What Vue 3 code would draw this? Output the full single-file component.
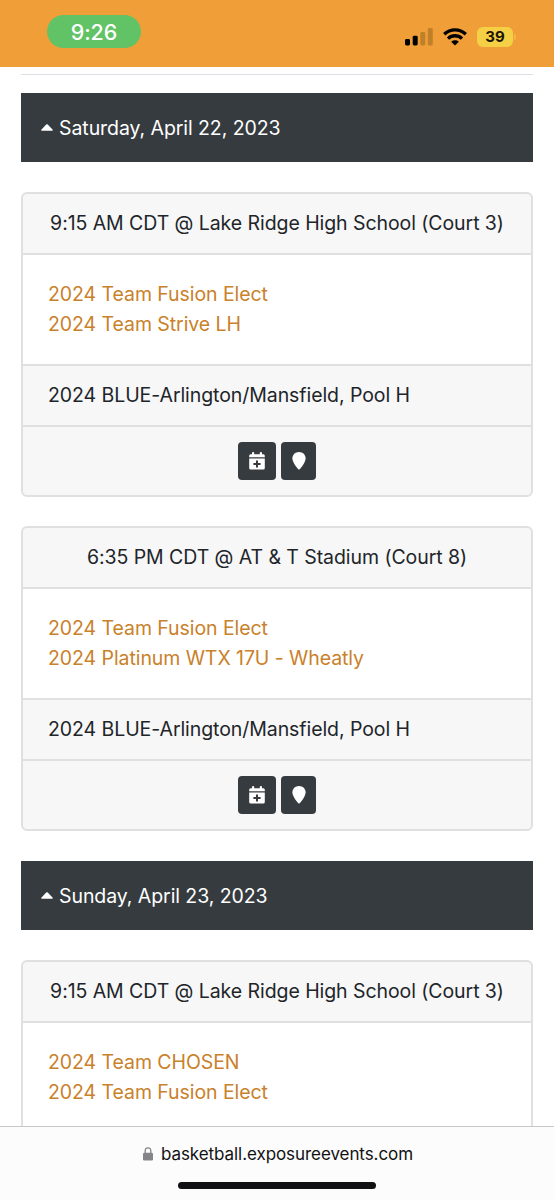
<script setup>
const pool = '2024 BLUE-Arlington/Mansfield, Pool H'
const days = [
  {
    date: 'Saturday, April 22, 2023',
    games: [
      { title: '9:15 AM CDT @ Lake Ridge High School (Court 3)', teams: ['2024 Team Fusion Elect', '2024 Team Strive LH'], pool },
      { title: '6:35 PM CDT @ AT & T Stadium (Court 8)', teams: ['2024 Team Fusion Elect', '2024 Platinum WTX 17U - Wheatly'], pool },
    ],
  },
  {
    date: 'Sunday, April 23, 2023',
    games: [
      { title: '9:15 AM CDT @ Lake Ridge High School (Court 3)', teams: ['2024 Team CHOSEN', '2024 Team Fusion Elect'] },
    ],
  },
]
</script>

<template>
  <div class="screen">
    <header class="status">
      <div class="time">9:26</div>
      <div class="indicators">
        <svg class="signal" width="28" height="18" viewBox="0 0 28 18">
          <rect x="0" y="11" width="5" height="6.5" rx="1.4" />
          <rect x="7.7" y="7.8" width="5" height="9.7" rx="1.4" />
          <rect x="15.3" y="4" width="5" height="13.5" rx="1.4" fill="#c08029" />
          <rect x="22.8" y="0" width="5" height="17.5" rx="1.4" fill="#c08029" />
        </svg>
        <svg class="wifi" width="24" height="18" viewBox="0 0 24 18">
          <g fill="none" stroke="#000" stroke-width="3.3">
            <path d="M1.2 6.3C7.2 .4 16.8 .4 22.8 6.3" />
            <path d="M5 10.6C9 6.8 15 6.8 19 10.6" />
          </g>
          <path d="M8.2 13.7C10.4 11.9 13.6 11.9 15.8 13.7L12 17.5Z" />
        </svg>
        <div class="battery"><span>39</span><i></i></div>
      </div>
    </header>

    <main class="page">
      <div class="rule"></div>
      <section v-for="day in days" :key="day.date" class="day">
        <h2 class="date">
          <svg width="12" height="7" viewBox="0 0 12 7"><path d="M.8 6.8Q-.2 6.5 .5 5.6L5.2 .6Q6 -.1 6.8 .6L11.5 5.6Q12.2 6.5 11.2 6.8Z" fill="#fff" /></svg>
          <span>{{ day.date }}</span>
        </h2>
        <article v-for="game in day.games" :key="game.title" class="card">
          <div class="title">{{ game.title }}</div>
          <div class="teams">
            <a v-for="team in game.teams" :key="team">{{ team }}</a>
          </div>
          <template v-if="game.pool">
            <div class="pool">{{ game.pool }}</div>
            <div class="actions">
              <button class="btn calendar" aria-label="Add to calendar">
                <svg width="16" height="18" viewBox="0 0 16 18">
                  <path fill="#fff" d="M3 1Q3 0 4.1 0T5.2 1V2.2H10.8V1Q10.8 0 11.9 0T13 1V2.2H14.3Q15.8 2.2 15.8 3.7V5.2H.2V3.7Q.2 2.2 1.7 2.2H3Z" />
                  <path fill="#fff" fill-rule="evenodd" d="M.2 6.5H15.8V16Q15.8 17.5 14.3 17.5H1.7Q.2 17.5 .2 16ZM7 8.4V11H4.4V13H7V15.6H9V13H11.6V11H9V8.4Z" />
                </svg>
              </button>
              <button class="btn" aria-label="Location">
                <svg width="14" height="18" viewBox="0 0 14 18"><path fill="#fff" d="M7 0C3.2 0 .4 2.8 .4 6.4C.4 9.6 3.8 14.2 6.1 17.1Q7 18.1 7.9 17.1C10.2 14.2 13.6 9.6 13.6 6.4C13.6 2.8 10.8 0 7 0Z" /></svg>
              </button>
            </div>
          </template>
        </article>
      </section>
    </main>

    <footer class="browser">
      <div class="address">
        <svg width="10" height="14" viewBox="0 0 10 14">
          <path d="M2.2 6V3.8Q2.2 .8 5 .8T7.8 3.8V6" fill="none" stroke="#858589" stroke-width="1.3" />
          <rect x="0" y="5.8" width="10" height="7.8" rx="1.4" fill="#858589" />
        </svg>
        <span>basketball.exposureevents.com</span>
      </div>
      <div class="home"></div>
    </footer>
  </div>
</template>

<style>
body { margin: 0; background: #fff; }
</style>

<style scoped>
.screen {
  width: 554px;
  height: 1200px;
  display: flex;
  flex-direction: column;
  overflow: hidden;
  background: #fff;
  color: #212529;
  font: 400 19.5px/30px Inter, "Liberation Sans", sans-serif;
  letter-spacing: -0.07px;
}
.status {
  flex: none;
  box-sizing: border-box;
  height: 67px;
  padding: 15px 38px 0 47px;
  display: flex;
  justify-content: space-between;
  background: #f09f38;
}
.time {
  width: 94px;
  height: 33px;
  border-radius: 16.5px;
  background: #62c366;
  color: #fff;
  font-size: 21.5px;
  font-weight: 500;
  line-height: 34px;
  text-align: center;
}
.indicators { display: flex; align-items: flex-start; padding-top: 12px; letter-spacing: 0; }
.signal { margin: 1px 10px 0 0; }
.wifi { margin: 1px 10px 0 0; }
.battery {
  display: flex;
  align-items: center;
  gap: 1px;
}
.battery span {
  width: 36px;
  height: 20px;
  border-radius: 6px;
  background: #f5cf45;
  color: #1c1603;
  font-size: 15px;
  font-weight: 700;
  line-height: 20px;
  text-align: center;
}
.battery i { width: 2px; height: 6px; border-radius: 0 2px 2px 0; background: #f3b83e; }
.page { flex: 1; min-height: 0; overflow: hidden; padding: 7px 21px 0; }
.rule { height: 1px; margin-bottom: 18px; background: #dddde3; }
.date {
  box-sizing: border-box;
  height: 69px;
  margin: 0 0 30px;
  padding: 0 0 0 20px;
  display: flex;
  align-items: center;
  gap: 6px;
  background: #363b3f;
  color: #fff;
  font-size: 19.5px;
  font-weight: 400;
}
.card {
  margin-bottom: 29px;
  border: 2px solid #e0e0e0;
  border-radius: 6px;
  background: #f7f7f7;
}
.card:last-child { margin-bottom: 30px; }
.title { height: 59px; line-height: 59px; text-align: center; white-space: nowrap; }
.teams {
  height: 85px;
  padding: 24px 25px 0;
  display: flex;
  flex-direction: column;
  border: solid #e0e0e0;
  border-width: 2px 0;
  background: #fff;
  color: #c9812a;
}
.pool { height: 59px; padding-left: 25px; line-height: 59px; border-bottom: 2px solid #e0e0e0; }
.actions { height: 68px; display: flex; justify-content: center; align-items: center; gap: 5px; }
.btn {
  width: 35px;
  height: 38px;
  padding: 0;
  display: flex;
  align-items: center;
  justify-content: center;
  border: 0;
  border-radius: 4px;
  background: #363b3f;
}
.calendar { width: 38px; }
.browser {
  flex: none;
  box-sizing: border-box;
  height: 74px;
  border-top: 1px solid #c8c8ca;
  background: #fcfcfd;
  color: #111;
  display: flex;
  flex-direction: column;
  align-items: center;
}
.address { display: flex; align-items: center; gap: 8px; height: 54px; font-size: 17px; padding-left: 2px; }
.home { width: 198px; height: 7px; margin-top: 1px; border-radius: 4px; background: #111113; }
</style>
